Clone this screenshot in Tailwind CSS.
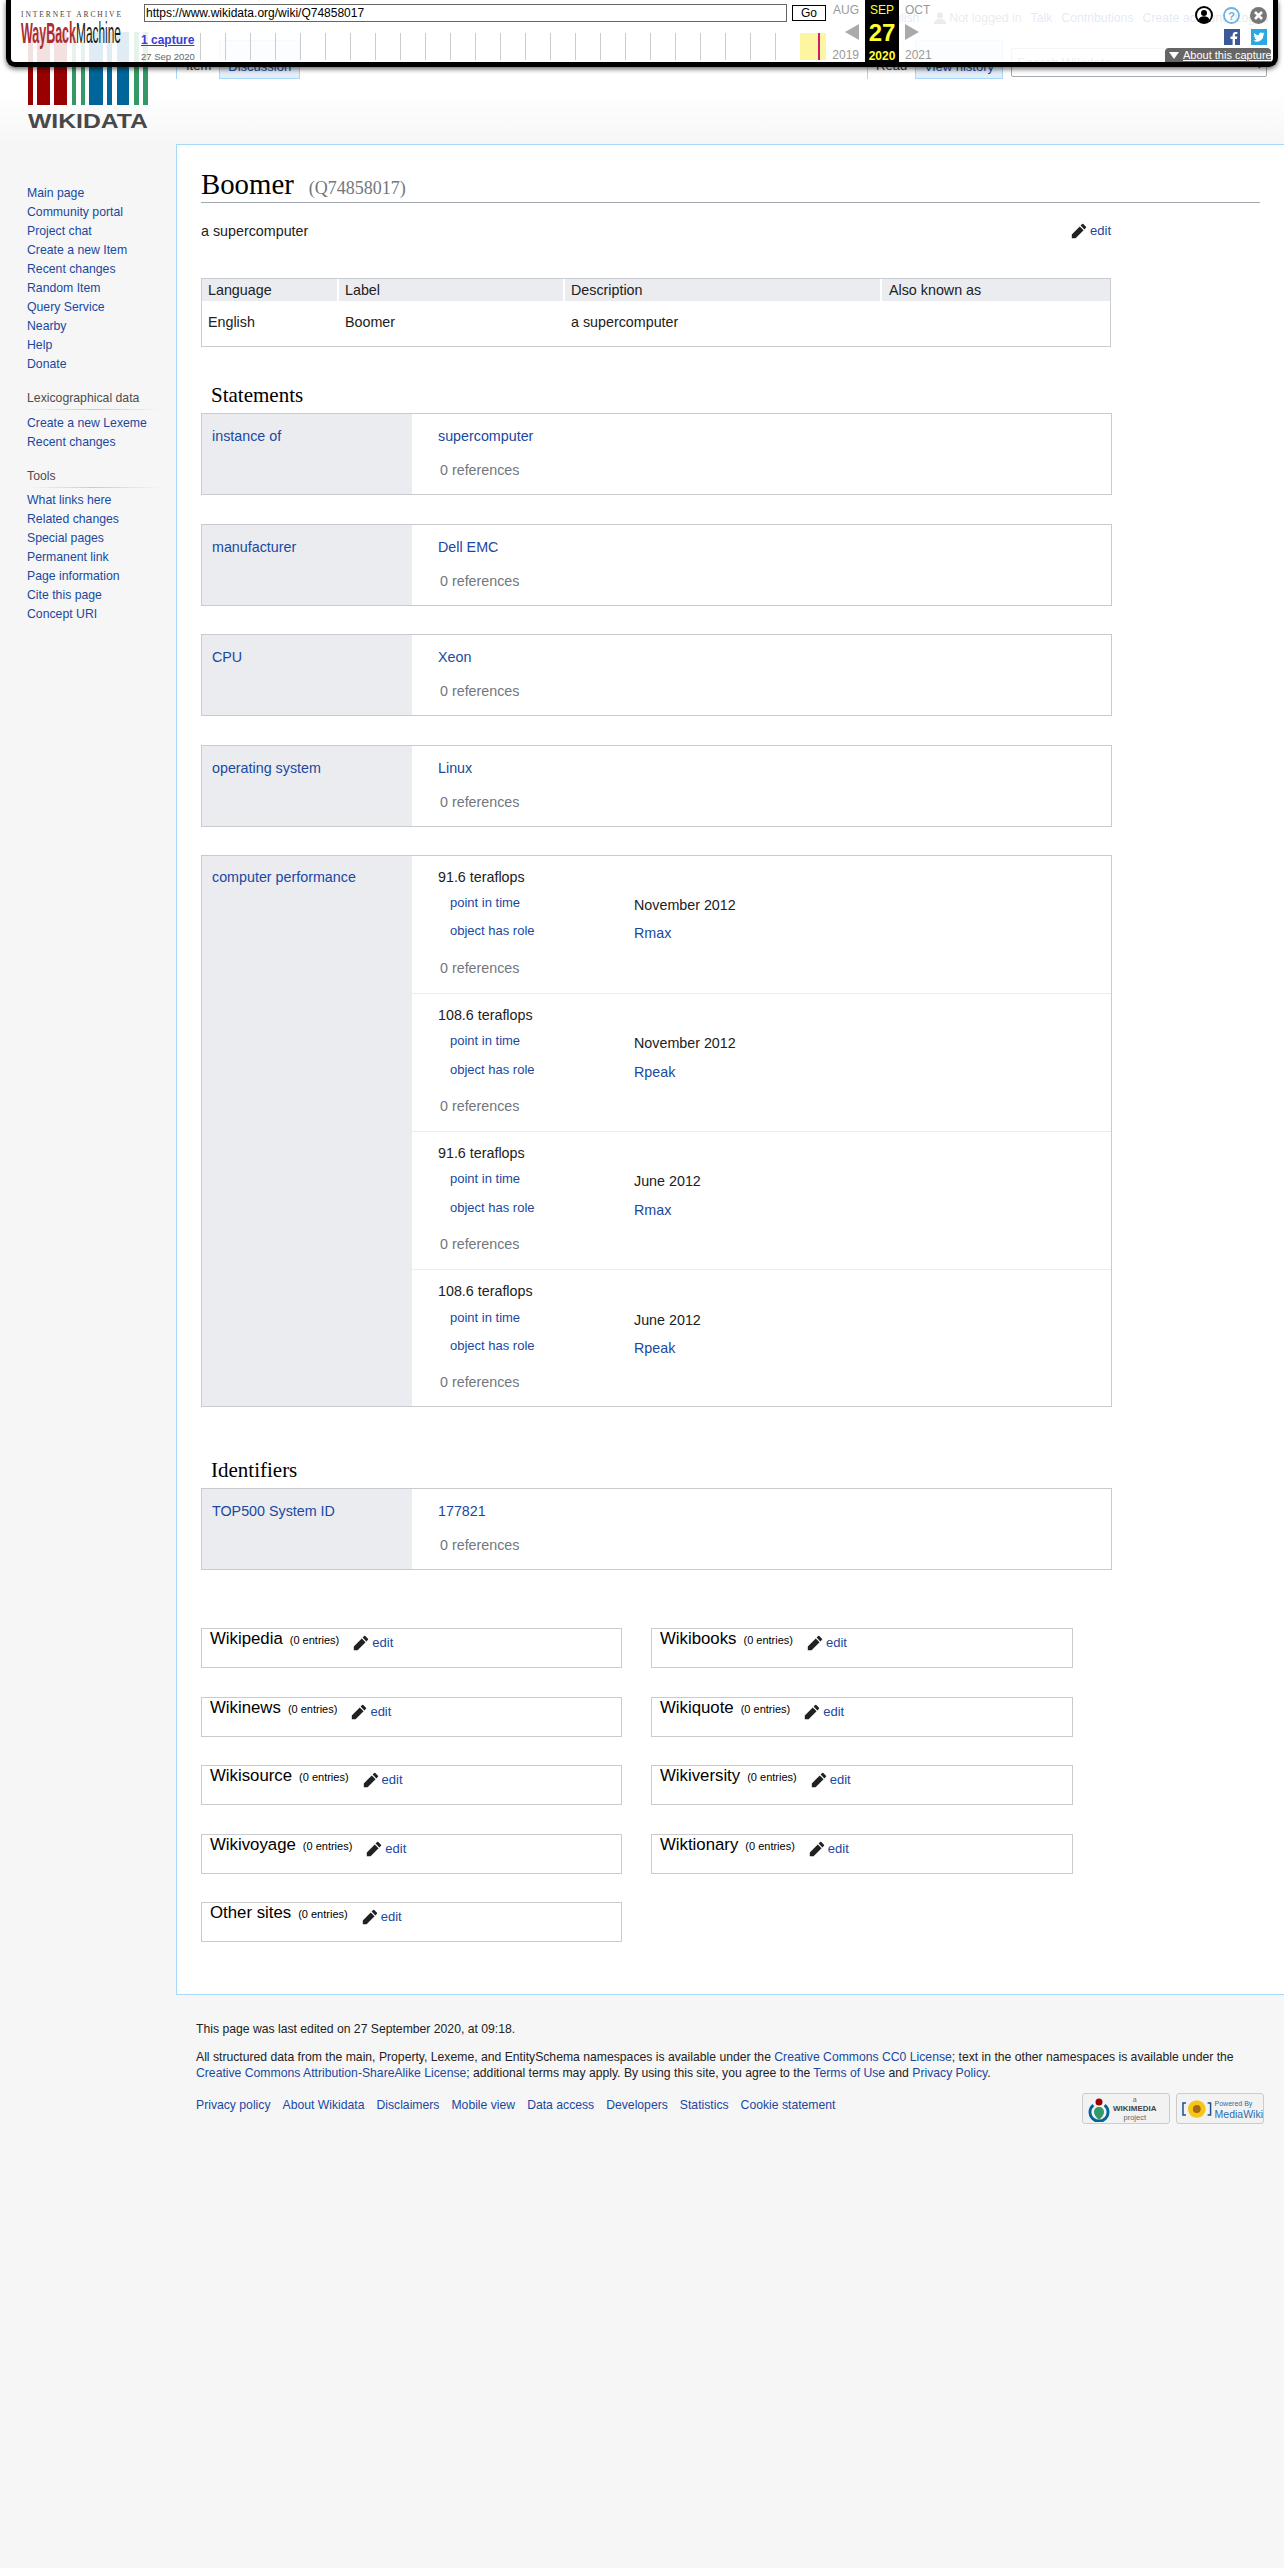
<!DOCTYPE html>
<html lang="en">
<head>
  <meta charset="UTF-8">
  <title>Boomer - Wikidata</title>
  <script src="https://cdn.jsdelivr.net/npm/@tailwindcss/browser@4"></script>
</head>
<body class="relative min-h-[2568px] bg-[#f6f6f6] font-['Liberation_Sans',Arial,sans-serif] text-[14.3px] text-[#202122]">

  <!-- wayback toolbar, sits over the page -->
  <div class="absolute top-0 left-[6px] z-10 flex h-[67px] w-[1272px] rounded-b-[9px] border-[5px] border-t-0 border-black bg-white/[.88] shadow-[0_2px_5px_rgba(0,0,0,0.6)]">
    <div class="w-[133px] shrink-0 pl-[10px] pt-[11px]">
      <svg width="100" height="38" viewBox="0 0 100 38" class="overflow-visible">
        <text x="0" y="6" font-family="Liberation Serif" font-size="7.5" fill="#444" textLength="100" lengthAdjust="spacing">INTERNET ARCHIVE</text>
        <text x="0" y="32" font-family="Liberation Sans" font-size="30" font-weight="700" fill="#ab2e33" textLength="55" lengthAdjust="spacingAndGlyphs">WayBack</text>
        <text x="55" y="32" font-family="Liberation Sans" font-size="30" fill="#1a1a1a" textLength="45" lengthAdjust="spacingAndGlyphs">Machine</text>
      </svg>
    </div>
    <div class="w-[682px] shrink-0">
      <div class="flex gap-[5px] pt-[4px]">
        <div class="h-[18px] w-[643px] border border-[#666] bg-white pl-[1px] text-[12px] leading-[16px] text-black">https://www.wikidata.org/wiki/Q74858017</div>
        <div class="h-[16px] w-[34px] mt-[1px] border border-black bg-white text-center text-[12px] leading-[14px] text-black">Go</div>
      </div>
      <div class="flex pt-[11px]">
        <div class="w-[56px] shrink-0">
          <a class="-ml-[3px] block text-[12px] font-bold leading-[14px] text-[#3b3bd6] underline">1 capture</a>
          <div class="-ml-[3px] mt-[5px] whitespace-nowrap text-[9.5px] leading-[10px] text-[#666]">27 Sep 2020</div>
        </div>
        <div class="flex h-[27px] flex-1">
          <div class="h-full w-[25px] border-l border-[#ccc]"></div><div class="h-full w-[25px] border-l border-[#ccc]"></div><div class="h-full w-[25px] border-l border-[#ccc]"></div><div class="h-full w-[25px] border-l border-[#ccc]"></div><div class="h-full w-[25px] border-l border-[#ccc]"></div><div class="h-full w-[25px] border-l border-[#ccc]"></div><div class="h-full w-[25px] border-l border-[#ccc]"></div><div class="h-full w-[25px] border-l border-[#ccc]"></div><div class="h-full w-[25px] border-l border-[#ccc]"></div><div class="h-full w-[25px] border-l border-[#ccc]"></div><div class="h-full w-[25px] border-l border-[#ccc]"></div><div class="h-full w-[25px] border-l border-[#ccc]"></div><div class="h-full w-[25px] border-l border-[#ccc]"></div><div class="h-full w-[25px] border-l border-[#ccc]"></div><div class="h-full w-[25px] border-l border-[#ccc]"></div><div class="h-full w-[25px] border-l border-[#ccc]"></div><div class="h-full w-[25px] border-l border-[#ccc]"></div><div class="h-full w-[25px] border-l border-[#ccc]"></div><div class="h-full w-[25px] border-l border-[#ccc]"></div><div class="h-full w-[25px] border-l border-[#ccc]"></div><div class="h-full w-[25px] border-l border-[#ccc]"></div><div class="h-full w-[25px] border-l border-[#ccc]"></div><div class="h-full w-[25px] border-l border-[#ccc]"></div><div class="h-full w-[25px] border-l border-[#ccc]"></div>
          <div class="flex h-full w-[26px] bg-[#fdf6a0] pl-[18px]"><div class="h-full w-[2px] bg-[#cf1a6b]"></div></div>
        </div>
      </div>
    </div>
    <!-- calendar -->
    <div class="flex w-[39px] shrink-0 flex-col items-end pr-[6px] pt-[3px] text-[12px] leading-[14px] text-[#999]">
      <div>AUG</div>
      <div class="mt-[7px] h-0 w-0 border-y-[8px] border-r-[14px] border-y-transparent border-r-[#aaa]"></div>
      <div class="mt-[8px]">2019</div>
    </div>
    <div class="flex h-[62px] w-[34px] shrink-0 flex-col items-center bg-black pt-[3px] text-[#ffff33]">
      <div class="text-[12px] leading-[14px]">SEP</div>
      <div class="mt-[3px] text-[24px] font-bold leading-[26px]">27</div>
      <div class="mt-[3px] text-[12px] font-bold leading-[14px]">2020</div>
    </div>
    <div class="flex w-[39px] shrink-0 flex-col items-start pl-[6px] pt-[3px] text-[12px] leading-[14px] text-[#999]">
      <div>OCT</div>
      <div class="mt-[7px] h-0 w-0 border-y-[8px] border-l-[14px] border-y-transparent border-l-[#aaa]"></div>
      <div class="mt-[8px]">2021</div>
    </div>
    <!-- right side icons -->
    <div class="flex flex-1 flex-col items-end pr-[2px]">
      <div class="flex items-center gap-[10px] pr-[4px] pt-[6px]">
        <svg width="18" height="18" viewBox="0 0 18 18"><circle cx="9" cy="9" r="9" fill="#000"/><circle cx="9" cy="9" r="7" fill="#fff"/><circle cx="9" cy="7" r="3" fill="#000"/><path d="M3.5 13.5c1-2.5 3-3.3 5.500-3.300s4.500.8 5.500 3.300c-1.500 2-3.500 3-5.500 3s-4-1-5.500-3z" fill="#000"/></svg>
        <svg width="17" height="17" viewBox="0 0 17 17"><circle cx="8.500" cy="8.500" r="7.500" fill="none" stroke="#6bb3e4" stroke-width="1.800"/><text x="8.500" y="12.500" text-anchor="middle" font-family="Liberation Sans" font-size="11.500" font-weight="700" fill="#6bb3e4">?</text></svg>
        <svg width="17" height="17" viewBox="0 0 17 17"><circle cx="8.500" cy="8.500" r="8.500" fill="#777"/><path d="M5 5l7 7M12 5l-7 7" stroke="#fff" stroke-width="2.600"/></svg>
      </div>
      <div class="flex gap-[11px] pr-[4px] pt-[5px]">
        <svg width="16" height="16" viewBox="0 0 16 16"><rect width="16" height="16" fill="#3b5998"/><path d="M11 16v-6h2l.3-2.400H11V6.200c0-.7.200-1.100 1.200-1.100h1.200V3c-.3 0-1-.1-1.800-.1-1.800 0-3 1.100-3 3.100v1.600H6.500V10h2.100v6z" fill="#fff"/></svg>
        <svg width="16" height="16" viewBox="0 0 16 16"><rect width="16" height="16" fill="#29a9e0"/><path d="M13.500 4.500c-.4.200-.8.300-1.300.4.500-.3.800-.7 1-1.300-.4.300-.9.400-1.400.6a2.300 2.300 0 0 0-3.900 2.100A6.400 6.400 0 0 1 3.200 3.900a2.300 2.300 0 0 0 .7 3c-.4 0-.7-.1-1-.3 0 1.100.8 2 1.800 2.300-.3.100-.7.100-1 0 .3.900 1.100 1.600 2.100 1.600a4.600 4.600 0 0 1-3.400 1 6.400 6.400 0 0 0 10-5.700c.4-.3.800-.8 1.100-1.300z" fill="#fff"/></svg>
      </div>
      <div class="mt-[3px] flex h-[14px] w-[106px] items-center gap-[4px] whitespace-nowrap rounded-t-[4px] bg-[#666] pl-[4px] text-[11px] leading-[14px] text-white">
        <div class="h-0 w-0 shrink-0 border-x-[5px] border-t-[7px] border-x-transparent border-t-white"></div>
        <span class="underline">About this capture</span>
      </div>
    </div>
  </div>

  <!-- page head -->
  <header class="flex h-[144px] bg-gradient-to-b from-white from-[65%] to-[#f6f6f6]">
    <div class="w-[176px] shrink-0 pl-[28px] pt-[32px]">
      <svg width="120" height="97" viewBox="0 0 120 97" class="overflow-visible">
        <rect x="0" y="0" width="5" height="73" fill="#990000"/><rect x="9" y="0" width="13" height="73" fill="#990000"/><rect x="26" y="0" width="13" height="73" fill="#990000"/>
        <rect x="44" y="0" width="4" height="73" fill="#339966"/><rect x="53" y="0" width="4" height="73" fill="#339966"/>
        <rect x="61" y="0" width="14" height="73" fill="#006699"/><rect x="79" y="0" width="5" height="73" fill="#006699"/><rect x="89" y="0" width="12" height="73" fill="#006699"/>
        <rect x="106" y="0" width="5" height="73" fill="#339966"/><rect x="115" y="0" width="5" height="73" fill="#339966"/>
        <text x="0" y="96" font-family="Liberation Sans" font-size="21" font-weight="700" fill="#484848" textLength="120" lengthAdjust="spacingAndGlyphs">WIKIDATA</text>
      </svg>
    </div>
    <div class="flex-1">
      <div class="flex h-[40px] items-start justify-end gap-[9px] pr-[16px] pt-[10px] text-[12.25px] leading-[16px] text-[#1a48a0]">
        <span class="mr-[6px]">English</span>
        <span class="flex items-center gap-[3px] text-[#54595d]"><svg width="12" height="12" viewBox="0 0 12 12"><circle cx="6" cy="3.500" r="3" fill="#54595d"/><path d="M0 12c0-3.500 2.500-5 6-5s6 1.500 6 5z" fill="#54595d"/></svg>Not logged in</span>
        <span>Talk</span><span>Contributions</span><span>Create account</span><span>Log in</span>
      </div>
      <div class="flex h-[39px] justify-between pr-[17px] text-[13px]">
        <div class="flex">
          <div class="h-full border-l border-[#a7d7f9] pl-[9px] pr-[8px] pt-[18px] leading-[16px] text-[#333]">Item</div>
          <div class="h-full border border-[#a7d7f9] bg-[#e4eef8] px-[8px] pt-[18px] leading-[16px] text-[#1a48a0]">Discussion</div>
        </div>
        <div class="flex">
          <div class="h-full border-l border-[#a7d7f9] px-[8px] pt-[18px] leading-[16px] text-[#333]">Read</div>
          <div class="h-full border border-[#a7d7f9] bg-[#e4eef8] px-[8px] pt-[18px] leading-[16px] text-[#1a48a0]">View history</div>
          <div class="ml-[8px] mt-[8px] flex h-[29px] w-[256px] items-center justify-between rounded-[2px] border border-[#a2a9b1] bg-white px-[5px] text-[13px] text-[#72777d]">
            <span>Search Wikidata</span>
            <svg width="12" height="12" viewBox="0 0 12 12"><circle cx="5" cy="5" r="3.500" fill="none" stroke="#54595d" stroke-width="1.500"/><path d="M8 8l3 3" stroke="#54595d" stroke-width="1.500"/></svg>
          </div>
        </div>
      </div>
    </div>
  </header>

  <div class="flex">
    <!-- sidebar -->
    <nav class="w-[176px] shrink-0 pl-[27px] pt-[40px] text-[12.25px] leading-[19px] text-[#1a48a0]">
      <div>Main page</div><div>Community portal</div><div>Project chat</div><div>Create a new Item</div><div>Recent changes</div><div>Random Item</div><div>Query Service</div><div>Nearby</div><div>Help</div><div>Donate</div>
      <div class="mt-[15px] leading-[19px] text-[#4d4d4d]">Lexicographical data</div>
      <div class="mb-[4px] mt-[1px] h-px w-[135px] bg-gradient-to-r from-transparent via-[#c8ccd1] to-transparent"></div>
      <div>Create a new Lexeme</div><div>Recent changes</div>
      <div class="mt-[15px] leading-[19px] text-[#4d4d4d]">Tools</div>
      <div class="mb-[3px] mt-[1px] h-px w-[135px] bg-gradient-to-r from-transparent via-[#c8ccd1] to-transparent"></div>
      <div>What links here</div><div>Related changes</div><div>Special pages</div><div>Permanent link</div><div>Page information</div><div>Cite this page</div><div>Concept URI</div>
    </nav>

    <!-- content -->
    <main class="h-[1851px] flex-1 border-y border-l border-[#a7d7f9] bg-white pl-[24px] pr-[24px] pt-[21px]">
      <h1 class="flex h-[37px] items-baseline border-b border-[#a2a9b1] font-['Liberation_Serif',serif] text-[28.8px] leading-[36px] text-black">Boomer <span class="ml-[15px] text-[18px] text-[#72777d]">(Q74858017)</span></h1>

      <div class="mt-[18px] flex h-[20px] w-[910px] items-center justify-between leading-[20px]">
        <span>a supercomputer</span>
        <span class="flex items-center gap-[3px] text-[13px] text-[#1a48a0]"><svg width="16" height="16" viewBox="0 0 20 20" fill="#202122"><path d="M16.770 8l1.940-2a1 1 0 0 0 0-1.410l-3.340-3.300a1 1 0 0 0-1.410 0L12 3.230zm-5.810-3.710L1 14.250V19h4.750l9.960-9.960-4.750-4.750z"/></svg>edit</span>
      </div>

      <!-- terms table -->
      <div class="mt-[37px] grid h-[69px] w-[910px] grid-cols-[137px_226px_317px_1fr] grid-rows-[22px_1fr] border border-[#c8ccd1] leading-[20px]">
        <div class="border-r-2 border-white bg-[#eaecf0] pl-[6px] pt-[1px]">Language</div>
        <div class="border-r-2 border-white bg-[#eaecf0] pl-[6px] pt-[1px]">Label</div>
        <div class="border-r-2 border-white bg-[#eaecf0] pl-[6px] pt-[1px]">Description</div>
        <div class="bg-[#eaecf0] pl-[7px] pt-[1px]">Also known as</div>
        <div class="pl-[6px] pt-[11px]">English</div>
        <div class="pl-[6px] pt-[11px]">Boomer</div>
        <div class="pl-[6px] pt-[11px]">a supercomputer</div>
        <div></div>
      </div>

      <h2 class="mb-[3px] mt-[33px] h-[30px] pl-[10px] font-['Liberation_Serif',serif] text-[21px] leading-[30px] text-black">Statements</h2>

      <div class="w-[911px] leading-[20px]">
        <div class="mb-[28.5px] flex border border-[#c8ccd1]">
          <div class="w-[210px] shrink-0 bg-[#eaecf0] pl-[10px] pt-[12px] text-[#1a48a0]">instance of</div>
          <div class="flex-1 pb-[14px] pl-[26px] pt-[12px]">
            <div class="text-[#1a48a0]">supercomputer</div>
            <div class="mt-[14px] pl-[2px] text-[#72777d]">0 references</div>
          </div>
        </div>
        <div class="mb-[28.5px] flex border border-[#c8ccd1]">
          <div class="w-[210px] shrink-0 bg-[#eaecf0] pl-[10px] pt-[12px] text-[#1a48a0]">manufacturer</div>
          <div class="flex-1 pb-[14px] pl-[26px] pt-[12px]">
            <div class="text-[#1a48a0]">Dell EMC</div>
            <div class="mt-[14px] pl-[2px] text-[#72777d]">0 references</div>
          </div>
        </div>
        <div class="mb-[28.5px] flex border border-[#c8ccd1]">
          <div class="w-[210px] shrink-0 bg-[#eaecf0] pl-[10px] pt-[12px] text-[#1a48a0]">CPU</div>
          <div class="flex-1 pb-[14px] pl-[26px] pt-[12px]">
            <div class="text-[#1a48a0]">Xeon</div>
            <div class="mt-[14px] pl-[2px] text-[#72777d]">0 references</div>
          </div>
        </div>
        <div class="mb-[28.5px] flex border border-[#c8ccd1]">
          <div class="w-[210px] shrink-0 bg-[#eaecf0] pl-[10px] pt-[12px] text-[#1a48a0]">operating system</div>
          <div class="flex-1 pb-[14px] pl-[26px] pt-[12px]">
            <div class="text-[#1a48a0]">Linux</div>
            <div class="mt-[14px] pl-[2px] text-[#72777d]">0 references</div>
          </div>
        </div>

        <div class="flex border border-[#c8ccd1]">
          <div class="w-[210px] shrink-0 bg-[#eaecf0] pl-[10px] pt-[11px] text-[#1a48a0]">computer performance</div>
          <div class="flex-1">
            <div class="h-[138px] border-b border-[#eaecf0] pl-[26px] pt-[11px]">
              <div>91.6 teraflops</div>
              <div class="mt-[6px] flex h-[28px] pl-[12px]"><span class="w-[184px] text-[13px] text-[#1a48a0]">point in time</span><span class="mt-[2px]">November 2012</span></div>
              <div class="flex h-[28px] pl-[12px]"><span class="w-[184px] text-[13px] text-[#1a48a0]">object has role</span><span class="mt-[2px] text-[#1a48a0]">Rmax</span></div>
              <div class="mt-[9px] pl-[2px] text-[#72777d]">0 references</div>
            </div>
            <div class="h-[138px] border-b border-[#eaecf0] pl-[26px] pt-[11px]">
              <div>108.6 teraflops</div>
              <div class="mt-[6px] flex h-[29px] pl-[12px]"><span class="w-[184px] text-[13px] text-[#1a48a0]">point in time</span><span class="mt-[2px]">November 2012</span></div>
              <div class="flex h-[28px] pl-[12px]"><span class="w-[184px] text-[13px] text-[#1a48a0]">object has role</span><span class="mt-[2px] text-[#1a48a0]">Rpeak</span></div>
              <div class="mt-[8px] pl-[2px] text-[#72777d]">0 references</div>
            </div>
            <div class="h-[138px] border-b border-[#eaecf0] pl-[26px] pt-[11px]">
              <div>91.6 teraflops</div>
              <div class="mt-[6px] flex h-[29px] pl-[12px]"><span class="w-[184px] text-[13px] text-[#1a48a0]">point in time</span><span class="mt-[2px]">June 2012</span></div>
              <div class="flex h-[28px] pl-[12px]"><span class="w-[184px] text-[13px] text-[#1a48a0]">object has role</span><span class="mt-[2px] text-[#1a48a0]">Rmax</span></div>
              <div class="mt-[8px] pl-[2px] text-[#72777d]">0 references</div>
            </div>
            <div class="h-[136px] pl-[26px] pt-[11px]">
              <div>108.6 teraflops</div>
              <div class="mt-[7px] flex h-[28px] pl-[12px]"><span class="w-[184px] text-[13px] text-[#1a48a0]">point in time</span><span class="mt-[2px]">June 2012</span></div>
              <div class="flex h-[28px] pl-[12px]"><span class="w-[184px] text-[13px] text-[#1a48a0]">object has role</span><span class="mt-[2px] text-[#1a48a0]">Rpeak</span></div>
              <div class="mt-[8px] pl-[2px] text-[#72777d]">0 references</div>
            </div>
          </div>
        </div>
      </div>

      <h2 class="mb-[3px] mt-[48px] h-[30px] pl-[10px] font-['Liberation_Serif',serif] text-[21px] leading-[30px] text-black">Identifiers</h2>

      <div class="flex w-[911px] border border-[#c8ccd1] leading-[20px]">
        <div class="w-[210px] shrink-0 bg-[#eaecf0] pl-[10px] pt-[12px] text-[#1a48a0]">TOP500 System ID</div>
        <div class="flex-1 pb-[14px] pl-[26px] pt-[12px]">
          <div class="text-[#1a48a0]">177821</div>
          <div class="mt-[14px] pl-[2px] text-[#72777d]">0 references</div>
        </div>
      </div>

      <!-- sitelinks -->
      <div class="mt-[58px] grid w-[872px] grid-cols-[421px_422px] gap-x-[29px] gap-y-[28.5px]">
        <div class="flex h-[40px] items-baseline border border-[#c8ccd1] pl-[8px] leading-[20px]"><span class="text-[16.8px] text-black">Wikipedia</span><span class="ml-[7px] text-[11px] text-black">(0 entries)</span><span class="ml-[14px] mt-[4px] flex items-center gap-[3px] self-start text-[13px] text-[#1a48a0]"><svg width="16" height="16" viewBox="0 0 20 20" fill="#202122"><path d="M16.770 8l1.940-2a1 1 0 0 0 0-1.410l-3.340-3.300a1 1 0 0 0-1.410 0L12 3.230zm-5.810-3.710L1 14.250V19h4.750l9.960-9.960-4.750-4.750z"/></svg>edit</span></div>
        <div class="flex h-[40px] items-baseline border border-[#c8ccd1] pl-[8px] leading-[20px]"><span class="text-[16.8px] text-black">Wikibooks</span><span class="ml-[7px] text-[11px] text-black">(0 entries)</span><span class="ml-[14px] mt-[4px] flex items-center gap-[3px] self-start text-[13px] text-[#1a48a0]"><svg width="16" height="16" viewBox="0 0 20 20" fill="#202122"><path d="M16.770 8l1.940-2a1 1 0 0 0 0-1.410l-3.340-3.300a1 1 0 0 0-1.410 0L12 3.230zm-5.810-3.710L1 14.250V19h4.750l9.960-9.960-4.750-4.750z"/></svg>edit</span></div>
        <div class="flex h-[40px] items-baseline border border-[#c8ccd1] pl-[8px] leading-[20px]"><span class="text-[16.8px] text-black">Wikinews</span><span class="ml-[7px] text-[11px] text-black">(0 entries)</span><span class="ml-[14px] mt-[4px] flex items-center gap-[3px] self-start text-[13px] text-[#1a48a0]"><svg width="16" height="16" viewBox="0 0 20 20" fill="#202122"><path d="M16.770 8l1.940-2a1 1 0 0 0 0-1.410l-3.340-3.300a1 1 0 0 0-1.410 0L12 3.230zm-5.810-3.710L1 14.250V19h4.750l9.960-9.960-4.750-4.750z"/></svg>edit</span></div>
        <div class="flex h-[40px] items-baseline border border-[#c8ccd1] pl-[8px] leading-[20px]"><span class="text-[16.8px] text-black">Wikiquote</span><span class="ml-[7px] text-[11px] text-black">(0 entries)</span><span class="ml-[14px] mt-[4px] flex items-center gap-[3px] self-start text-[13px] text-[#1a48a0]"><svg width="16" height="16" viewBox="0 0 20 20" fill="#202122"><path d="M16.770 8l1.940-2a1 1 0 0 0 0-1.410l-3.340-3.300a1 1 0 0 0-1.410 0L12 3.230zm-5.810-3.710L1 14.250V19h4.750l9.960-9.960-4.750-4.750z"/></svg>edit</span></div>
        <div class="flex h-[40px] items-baseline border border-[#c8ccd1] pl-[8px] leading-[20px]"><span class="text-[16.8px] text-black">Wikisource</span><span class="ml-[7px] text-[11px] text-black">(0 entries)</span><span class="ml-[14px] mt-[4px] flex items-center gap-[3px] self-start text-[13px] text-[#1a48a0]"><svg width="16" height="16" viewBox="0 0 20 20" fill="#202122"><path d="M16.770 8l1.940-2a1 1 0 0 0 0-1.410l-3.340-3.300a1 1 0 0 0-1.410 0L12 3.230zm-5.810-3.710L1 14.250V19h4.750l9.960-9.960-4.750-4.750z"/></svg>edit</span></div>
        <div class="flex h-[40px] items-baseline border border-[#c8ccd1] pl-[8px] leading-[20px]"><span class="text-[16.8px] text-black">Wikiversity</span><span class="ml-[7px] text-[11px] text-black">(0 entries)</span><span class="ml-[14px] mt-[4px] flex items-center gap-[3px] self-start text-[13px] text-[#1a48a0]"><svg width="16" height="16" viewBox="0 0 20 20" fill="#202122"><path d="M16.770 8l1.940-2a1 1 0 0 0 0-1.410l-3.340-3.300a1 1 0 0 0-1.410 0L12 3.230zm-5.810-3.710L1 14.250V19h4.750l9.960-9.960-4.750-4.750z"/></svg>edit</span></div>
        <div class="flex h-[40px] items-baseline border border-[#c8ccd1] pl-[8px] leading-[20px]"><span class="text-[16.8px] text-black">Wikivoyage</span><span class="ml-[7px] text-[11px] text-black">(0 entries)</span><span class="ml-[14px] mt-[4px] flex items-center gap-[3px] self-start text-[13px] text-[#1a48a0]"><svg width="16" height="16" viewBox="0 0 20 20" fill="#202122"><path d="M16.770 8l1.940-2a1 1 0 0 0 0-1.410l-3.340-3.300a1 1 0 0 0-1.410 0L12 3.230zm-5.810-3.710L1 14.250V19h4.750l9.960-9.960-4.750-4.750z"/></svg>edit</span></div>
        <div class="flex h-[40px] items-baseline border border-[#c8ccd1] pl-[8px] leading-[20px]"><span class="text-[16.8px] text-black">Wiktionary</span><span class="ml-[7px] text-[11px] text-black">(0 entries)</span><span class="ml-[14px] mt-[4px] flex items-center gap-[3px] self-start text-[13px] text-[#1a48a0]"><svg width="16" height="16" viewBox="0 0 20 20" fill="#202122"><path d="M16.770 8l1.940-2a1 1 0 0 0 0-1.410l-3.340-3.300a1 1 0 0 0-1.410 0L12 3.230zm-5.810-3.710L1 14.250V19h4.750l9.960-9.960-4.750-4.750z"/></svg>edit</span></div>
        <div class="flex h-[40px] items-baseline border border-[#c8ccd1] pl-[8px] leading-[20px]"><span class="text-[16.8px] text-black">Other sites</span><span class="ml-[7px] text-[11px] text-black">(0 entries)</span><span class="ml-[14px] mt-[4px] flex items-center gap-[3px] self-start text-[13px] text-[#1a48a0]"><svg width="16" height="16" viewBox="0 0 20 20" fill="#202122"><path d="M16.770 8l1.940-2a1 1 0 0 0 0-1.410l-3.340-3.300a1 1 0 0 0-1.410 0L12 3.230zm-5.810-3.710L1 14.250V19h4.750l9.960-9.960-4.750-4.750z"/></svg>edit</span></div>
      </div>
    </main>
  </div>

  <!-- footer -->
  <footer class="pl-[196px] pr-[20px] pt-[26px] text-[12.2px] leading-[16px] text-[#222]">
    <div>This page was last edited on 27 September 2020, at 09:18.</div>
    <div class="mt-[12px] w-[1068px]">All structured data from the main, Property, Lexeme, and EntitySchema namespaces is available under the <span class="text-[#1a48a0]">Creative Commons CC0 License</span>; text in the other namespaces is available under the <span class="text-[#1a48a0]">Creative Commons Attribution-ShareAlike License</span>; additional terms may apply. By using this site, you agree to the <span class="text-[#1a48a0]">Terms of Use</span> and <span class="text-[#1a48a0]">Privacy Policy</span>.</div>
    <div class="mt-[12px] flex justify-between">
      <div class="flex gap-[12px] pt-[4px] text-[#1a48a0]"><span>Privacy policy</span><span>About Wikidata</span><span>Disclaimers</span><span>Mobile view</span><span>Data access</span><span>Developers</span><span>Statistics</span><span>Cookie statement</span></div>
      <div class="flex gap-[6px]">
        <div class="flex h-[31px] w-[88px] items-center rounded-[3px] border border-[#ccc] bg-[#f2f2f2] pl-[4px]">
          <svg width="24" height="26" viewBox="0 0 24 26"><circle cx="12" cy="6" r="3.500" fill="#990000"/><path d="M12 24V11c-3 0-5 2-5 5s2 5 5 8zm0 0V11c3 0 5 2 5 5s-2 5-5 8z" fill="#339966"/><path d="M5.500 8a10.500 10.500 0 1 0 13 0l-1.800 2.200a7.600 7.600 0 1 1-9.400 0z" fill="#006699"/></svg>
          <div class="ml-[2px] flex flex-col items-center leading-[9px] text-[#666]"><span class="text-[7px]">a</span><span class="text-[8px] font-bold text-[#444]">WIKIMEDIA</span><span class="text-[7.5px]">project</span></div>
        </div>
        <div class="flex h-[31px] w-[88px] items-center rounded-[3px] border border-[#ccc] bg-[#f2f2f2] pl-[5px]">
          <svg width="30" height="26" viewBox="0 0 30 26"><path d="M4 7H1v12h3M26 7h3v12h-3" fill="none" stroke="#1a4f8a" stroke-width="1.500"/><circle cx="15" cy="13" r="9" fill="#f5c518"/><circle cx="15" cy="13" r="4" fill="#a66a12"/></svg>
          <div class="ml-[3px] flex flex-col leading-[10px] text-[#2a6cb0]"><span class="text-[7px]">Powered By</span><span class="text-[10.5px]">MediaWiki</span></div>
        </div>
      </div>
    </div>
  </footer>
</body>
</html>
